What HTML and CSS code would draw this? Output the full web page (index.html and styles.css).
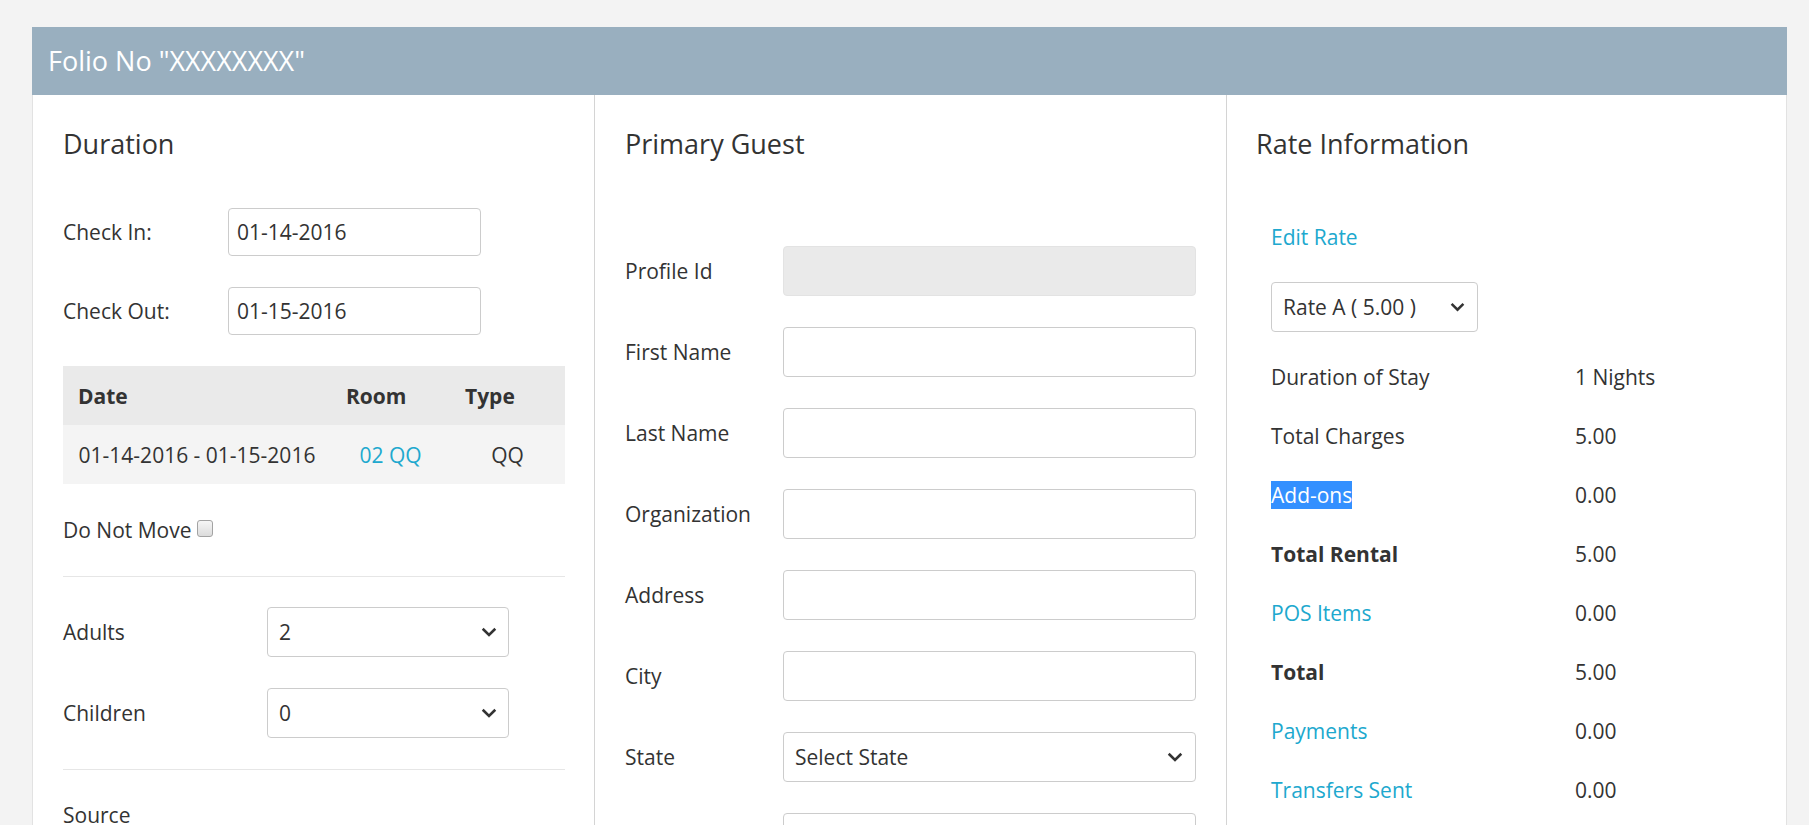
FILE: index.html
```html
<!DOCTYPE html>
<html lang="en">
<head>
<meta charset="utf-8">
<title>Folio</title>
<link rel="stylesheet" href="styles.css">
</head>
<body>
<div class="page">
  <section class="panel">
    <header class="panel-head">Folio No &quot;XXXXXXXX&quot;</header>
    <div class="panel-body">

      <div class="col col-duration">
        <h4 class="col-title">Duration</h4>
        <div class="field date-field">
          <label class="field-label">Check In:</label>
          <input class="text-input date-input" type="text" value="01-14-2016">
        </div>
        <div class="field date-field">
          <label class="field-label">Check Out:</label>
          <input class="text-input date-input" type="text" value="01-15-2016">
        </div>
        <table class="stay-table">
          <colgroup><col class="c-date"><col class="c-room"><col></colgroup>
          <thead>
            <tr><th>Date</th><th>Room</th><th>Type</th></tr>
          </thead>
          <tbody>
            <tr><td>01-14-2016 - 01-15-2016</td><td><a class="link" href="#">02 QQ</a></td><td>QQ</td></tr>
          </tbody>
        </table>
        <div class="dnm">Do Not Move <input type="checkbox" class="chk"></div>
        <hr class="sep">
        <div class="field count-field">
          <label class="field-label">Adults</label>
          <div class="select count-select"><span>2</span><svg class="chev" width="16" height="10" viewBox="0 0 16 10"><path d="M1.7 1.8 L8 7.9 L14.3 1.8" fill="none" stroke="#333" stroke-width="2.6"/></svg></div>
        </div>
        <div class="field count-field">
          <label class="field-label">Children</label>
          <div class="select count-select"><span>0</span><svg class="chev" width="16" height="10" viewBox="0 0 16 10"><path d="M1.7 1.8 L8 7.9 L14.3 1.8" fill="none" stroke="#333" stroke-width="2.6"/></svg></div>
        </div>
        <hr class="sep">
        <div class="plain-label">Source</div>
      </div>

      <div class="col col-guest">
        <h4 class="col-title guest-title">Primary Guest</h4>
        <div class="field guest-field">
          <label class="field-label">Profile Id</label>
          <input class="text-input guest-input is-disabled" type="text" disabled>
        </div>
        <div class="field guest-field">
          <label class="field-label">First Name</label>
          <input class="text-input guest-input" type="text">
        </div>
        <div class="field guest-field">
          <label class="field-label">Last Name</label>
          <input class="text-input guest-input" type="text">
        </div>
        <div class="field guest-field">
          <label class="field-label">Organization</label>
          <input class="text-input guest-input" type="text">
        </div>
        <div class="field guest-field">
          <label class="field-label">Address</label>
          <input class="text-input guest-input" type="text">
        </div>
        <div class="field guest-field">
          <label class="field-label">City</label>
          <input class="text-input guest-input" type="text">
        </div>
        <div class="field guest-field">
          <label class="field-label">State</label>
          <div class="select guest-select"><span>Select State</span><svg class="chev" width="16" height="10" viewBox="0 0 16 10"><path d="M1.7 1.8 L8 7.9 L14.3 1.8" fill="none" stroke="#333" stroke-width="2.6"/></svg></div>
        </div>
        <div class="field guest-field">
          <label class="field-label">Zip</label>
          <input class="text-input guest-input" type="text">
        </div>
      </div>

      <div class="col col-rate">
        <h4 class="col-title">Rate Information</h4>
        <div class="rate-block">
          <a class="link edit-rate" href="#">Edit Rate</a>
          <div class="select rate-select"><span>Rate A ( 5.00 )</span><svg class="chev" width="15" height="10" viewBox="0 0 15 10"><path d="M1.6 1.8 L7.5 7.7 L13.4 1.8" fill="none" stroke="#333" stroke-width="2.5"/></svg></div>
          <div class="rate-grid">
            <div class="r-label">Duration of Stay</div><div class="r-value">1 Nights</div>
            <div class="r-label">Total Charges</div><div class="r-value">5.00</div>
            <div class="r-label"><span class="selected">Add-ons</span></div><div class="r-value">0.00</div>
            <div class="r-label strong">Total Rental</div><div class="r-value">5.00</div>
            <div class="r-label"><a class="link" href="#">POS Items</a></div><div class="r-value">0.00</div>
            <div class="r-label strong">Total</div><div class="r-value">5.00</div>
            <div class="r-label"><a class="link" href="#">Payments</a></div><div class="r-value">0.00</div>
            <div class="r-label"><a class="link" href="#">Transfers Sent</a></div><div class="r-value">0.00</div>
          </div>
        </div>
      </div>

    </div>
  </section>
</div>
</body>
</html>
```

FILE: styles.css
```css
* { box-sizing: border-box; }

html, body {
  margin: 0;
  height: 100%;
  overflow: hidden;
}

body {
  background: #f3f3f3;
  font-family: "Open Sans", "Noto Sans", "DejaVu Sans", sans-serif;
  font-size: 21px;
  line-height: 30px;
  color: #333;
}

.page {
  padding: 27px 22px 0 32px;
}

.panel {
  background: #fff;
}

.panel-head {
  height: 68px;
  background: #99afbf;
  color: #fff;
  font-size: 27px;
  line-height: 1;
  display: flex;
  align-items: center;
  padding: 0 0 2px 16px;
}

.panel-body {
  display: grid;
  grid-template-columns: 561px 633px 559px;
  border-left: 1px solid #e2e2e2;
  border-right: 1px solid #e2e2e2;
  min-height: 900px;
}

.col {
  padding: 34px 30px 0;
  display: flex;
  flex-direction: column;
  gap: 31px;
}

.col-duration {
  padding-right: 29px;
}

.col-guest {
  border-left: 1px solid #d4d4d4;
  border-right: 1px solid #d4d4d4;
}

.col-rate {
  padding-left: 29px;
  gap: 0;
}

.col-title {
  margin: 0 0 18px;
  font-size: 27px;
  font-weight: 400;
  line-height: 30px;
}

.guest-title {
  margin-bottom: 56px;
}

.field {
  display: flex;
  align-items: center;
}

.field-label {
  flex: none;
}

.date-field .field-label { width: 165px; }
.count-field .field-label { width: 204px; }
.guest-field .field-label { width: 158px; }

.text-input {
  font: inherit;
  color: #333;
  background: #fff;
  border: 1px solid #cccccc;
  border-radius: 4px;
  padding: 0 8px;
  outline: none;
  margin: 0;
}

.date-input {
  width: 253px;
  height: 48px;
}

.guest-input {
  width: 413px;
  height: 50px;
}

.guest-input.is-disabled {
  background: #eaeaea;
  border-color: #e3e3e3;
}

.select {
  display: flex;
  align-items: center;
  justify-content: space-between;
  height: 50px;
  background: #fff;
  border: 1px solid #cccccc;
  border-radius: 4px;
  padding: 0 11px 0 11px;
}

.chev { flex: none; }

.count-select { width: 242px; }
.guest-select { width: 413px; padding-right: 12px; }

.stay-table {
  width: 100%;
  border-collapse: collapse;
  table-layout: fixed;
}

.c-date { width: 268px; }
.c-room { width: 119px; }

.stay-table th,
.stay-table td {
  height: 59px;
  padding: 0 15px;
  vertical-align: middle;
  white-space: nowrap;
}

.stay-table th {
  background: #eaeaea;
  text-align: left;
  font-weight: 700;
}

.stay-table td {
  background: #f4f4f4;
  text-align: center;
}

.link {
  color: #20a8ce;
  text-decoration: none;
}

.dnm {
  height: 30px;
}

.chk {
  appearance: none;
  -webkit-appearance: none;
  width: 16px;
  height: 17px;
  margin: 5px 0 0;
  vertical-align: top;
  border: 1px solid #a3a3a3;
  border-radius: 3px;
  background: linear-gradient(#f6f6f6, #dcdcdc);
}

.sep {
  margin: 0 0 -1px;
  border: 0;
  border-top: 1px solid #e6e6e6;
  height: 0;
}

.plain-label {
  height: 30px;
}

.rate-block {
  padding-left: 15px;
  display: flex;
  flex-direction: column;
}

.edit-rate {
  margin-top: 45px;
  align-self: flex-start;
  line-height: 30px;
}

.rate-select {
  width: 207px;
  margin-top: 30px;
  padding-right: 12px;
}

.rate-grid {
  margin-top: 15px;
  display: grid;
  grid-template-columns: 304px auto;
  grid-auto-rows: 59px;
  align-items: center;
}

.strong {
  font-weight: 700;
}

.selected {
  background: #3390ff;
  color: #fff;
  line-height: normal;
}
```
